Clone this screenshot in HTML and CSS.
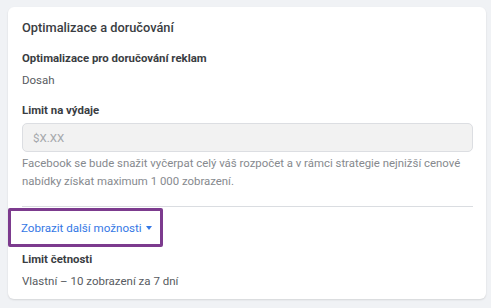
FILE: index.html
```html
<!DOCTYPE html>
<html lang="cs">
<head>
<meta charset="utf-8">
<link rel="stylesheet" href="styles.css">
</head>
<body>
<div class="card">
  <h2 class="title">Optimalizace a doručování</h2>
  <div class="field">
    <div class="label">Optimalizace pro doručování reklam</div>
    <div class="value">Dosah</div>
  </div>
  <div class="field">
    <div class="label">Limit na výdaje</div>
    <div class="input">$X.XX</div>
    <p class="help">Facebook se bude snažit vyčerpat celý váš rozpočet a v rámci strategie nejnižší cenové nabídky získat maximum 1&nbsp;000 zobrazení.</p>
  </div>
  <div class="divider"></div>
  <div class="more-wrap">
    <a class="more">Zobrazit další možnosti <span class="caret"></span></a>
  </div>
  <div class="field last">
    <div class="label">Limit četnosti</div>
    <div class="value">Vlastní – 10 zobrazení za 7 dní</div>
  </div>
</div>
</body>
</html>
```
FILE: styles.css
```css
html, body { margin: 0; padding: 0; }
body {
  background: #f0f2f5;
  font-family: Roboto, "Liberation Sans", sans-serif;
  width: 491px;
  height: 308px;
  overflow: hidden;
  padding: 7px 5px 0 8px;
  box-sizing: border-box;
}
.card {
  background: #fff;
  border-radius: 6px;
  box-shadow: 0 1px 2px rgba(0,0,0,0.12);
  padding: 12px 13px 14px 14px;
  height: 292px;
  box-sizing: border-box;
  display: flex;
  flex-direction: column;
}
.card > * { flex-shrink: 0; }
.title {
  margin: 0;
  font-size: 12.8px;
  font-weight: 500;
  color: #3a3d42;
  line-height: 18px;
}
.field { display: flex; flex-direction: column; }
.field:first-of-type { margin-top: 13px; }
.label {
  font-size: 11.4px;
  font-weight: 700;
  color: #3a3d42;
  line-height: 16px;
}
.value {
  font-size: 11.5px;
  color: #575b61;
  line-height: 16px;
  margin-top: 6px;
}
.field + .field { margin-top: 14px; }
.input {
  margin-top: 5px;
  height: 29px;
  box-sizing: border-box;
  border: 1px solid #dcdee2;
  border-radius: 5px;
  background: #f2f2f2;
  color: #a4a7ab;
  font-size: 11.5px;
  display: flex;
  align-items: center;
  padding-left: 10px;
}
.help {
  margin: 2px 0 0;
  font-size: 11.4px;
  line-height: 18px;
  color: #86898e;
}
.divider {
  margin-top: 16px;
  height: 1px;
  background: #dadde1;
}
.more-wrap {
  margin: 1px 0 0 -14px;
  width: 155px;
  height: 39px;
  box-sizing: border-box;
  border: 3.5px solid #7c3b8e;
  border-radius: 2px;
  display: flex;
  align-items: center;
  padding-left: 10px;
}
.more {
  font-size: 11.6px;
  color: #3578e5;
  display: flex;
  align-items: center;
  gap: 4px;
}
.caret {
  width: 0; height: 0;
  border-left: 3.5px solid transparent;
  border-right: 3.5px solid transparent;
  border-top: 4px solid #3578e5;
}
.field.last { margin-top: 4px; }
```
